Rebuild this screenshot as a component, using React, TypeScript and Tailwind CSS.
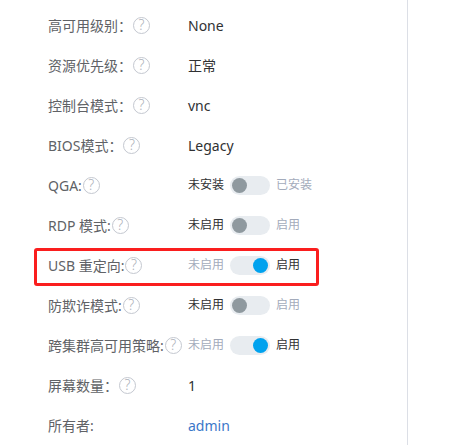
import React from 'react'

type Row = {
  label: string
  help?: boolean
  value?: string
  link?: boolean
  toggle?: { off: string; on: string; checked: boolean }
}

const rows: Row[] = [
  { label: '高可用级别：', help: true, value: 'None' },
  { label: '资源优先级：', help: true, value: '正常' },
  { label: '控制台模式：', help: true, value: 'vnc' },
  { label: 'BIOS模式：', help: true, value: 'Legacy' },
  { label: 'QGA:', help: true, toggle: { off: '未安装', on: '已安装', checked: false } },
  { label: 'RDP 模式:', help: true, toggle: { off: '未启用', on: '启用', checked: false } },
  { label: 'USB 重定向:', help: true, toggle: { off: '未启用', on: '启用', checked: true } },
  { label: '防欺诈模式:', help: true, toggle: { off: '未启用', on: '启用', checked: false } },
  { label: '跨集群高可用策略:', help: true, toggle: { off: '未启用', on: '启用', checked: true } },
  { label: '屏幕数量：', help: true, value: '1' },
  { label: '所有者:', value: 'admin', link: true },
]

function HelpIcon() {
  return (
    <span className="ml-[1px] flex h-[17px] w-[17px] shrink-0 items-center justify-center rounded-full border border-[#c4c8d0] text-[14px] font-light leading-none text-[#adb2ba]">
      ?
    </span>
  )
}

function Toggle({ off, on, checked }: { off: string; on: string; checked: boolean }) {
  return (
    <div className="flex items-center text-[12px]">
      <span className={checked ? 'text-[#a3abbb]' : 'text-[#303133]'}>{off}</span>
      <span
        className={`mx-[6px] flex h-[19px] w-[40px] items-center rounded-full bg-[#e8ecf0] px-[2px] ${
          checked ? 'justify-end' : 'justify-start'
        }`}
      >
        <span
          className={`h-[15px] w-[15px] rounded-full ${checked ? 'bg-[#00a2ee]' : 'bg-[#8f999f]'}`}
        />
      </span>
      <span className={checked ? 'text-[#303133]' : 'text-[#a3abbb]'}>{on}</span>
    </div>
  )
}

export default function App() {
  return (
    <div
      className="relative h-[446px] w-[453px] overflow-hidden bg-white"
      style={{ fontFamily: '"Noto Sans", "Noto Sans CJK SC", sans-serif' }}
    >
      <div className="h-[445px] w-[408px] border-r border-[#dcdfe6] pl-[48px] pt-[5px]">
        {rows.map((row) => (
          <div key={row.label} className="flex h-10 items-center text-[14px]">
            <div className="flex w-[140px] items-center text-[#606266]">
              <span>{row.label}</span>
              {row.help && <HelpIcon />}
            </div>
            {row.toggle ? (
              <Toggle {...row.toggle} />
            ) : (
              <span className={row.link ? 'text-[#3b78c9]' : 'text-[#303133]'}>{row.value}</span>
            )}
          </div>
        ))}
      </div>
      <div className="absolute left-[34px] top-[248px] h-[38px] w-[285px] rounded-[3px] border-[3px] border-[#fa1e1e]" />
    </div>
  )
}
